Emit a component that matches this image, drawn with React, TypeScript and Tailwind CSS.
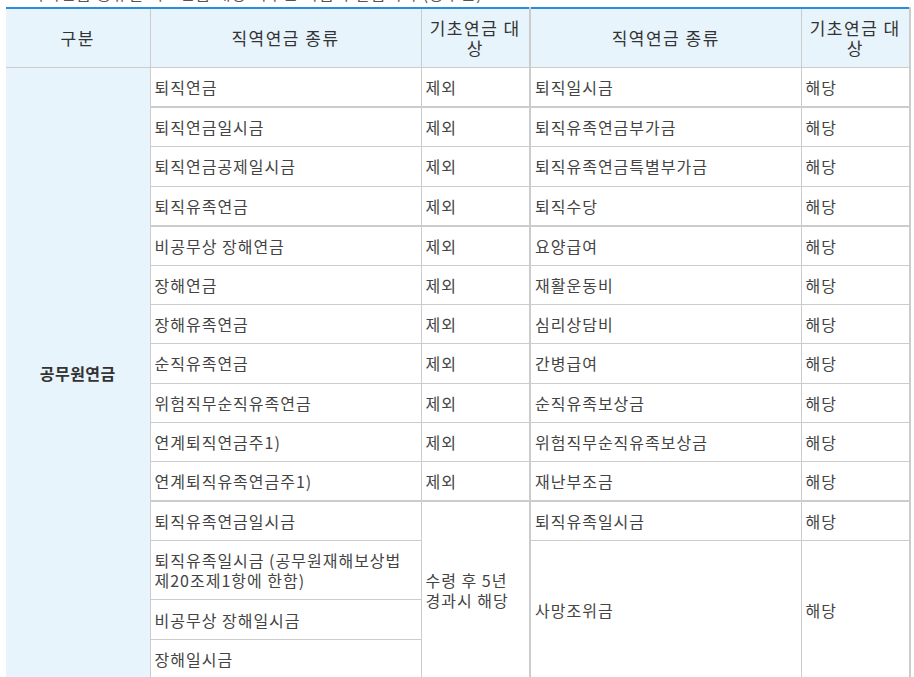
import React from "react";

const FONT = "font-['Noto_Sans_CJK_KR','Noto_Sans',sans-serif]";

const rows: [string, string, string, string][] = [
  ["퇴직연금", "제외", "퇴직일시금", "해당"],
  ["퇴직연금일시금", "제외", "퇴직유족연금부가금", "해당"],
  ["퇴직연금공제일시금", "제외", "퇴직유족연금특별부가금", "해당"],
  ["퇴직유족연금", "제외", "퇴직수당", "해당"],
  ["비공무상 장해연금", "제외", "요양급여", "해당"],
  ["장해연금", "제외", "재활운동비", "해당"],
  ["장해유족연금", "제외", "심리상담비", "해당"],
  ["순직유족연금", "제외", "간병급여", "해당"],
  ["위험직무순직유족연금", "제외", "순직유족보상금", "해당"],
  ["연계퇴직연금주1)", "제외", "위험직무순직유족보상금", "해당"],
  ["연계퇴직유족연금주1)", "제외", "재난부조금", "해당"],
];

const thickRows = new Set([0, 3, 10]);

const td = "border border-[#cccccc] px-[4px] py-[9.1px] text-[16px] leading-[20px] tracking-[1px] break-keep text-[#444444] align-middle text-left font-normal";
const th = "border border-[#cccccc] border-t-2 border-t-[#2a8ddb] bg-[#e8f4fb] px-[4px] py-[9px] text-[17px] leading-[20px] tracking-[1.5px] text-[#333333] font-normal text-center align-middle";

export default function App() {
  return (
    <div className={`bg-white w-[914px] h-[677px] overflow-hidden ${FONT}`}>
      <div className="h-[7px] overflow-hidden pl-[16px]">
        <p className="mt-[-16px] text-[16px] leading-[18px] tracking-[1px] text-[#555555] whitespace-nowrap">
          * 직역연금 종류별 기초연금 대상 여부는 다음과 같습니다 (공무원)
        </p>
      </div>
      <table className="ml-[6px] w-[904px] table-fixed border-collapse">
        <colgroup>
          <col className="w-[144px]" />
          <col className="w-[271px]" />
          <col className="w-[109px]" />
          <col className="w-[271px]" />
          <col className="w-[109px]" />
        </colgroup>
        <thead>
          <tr>
            <th className={`${th} border-l-0`}>구분</th>
            <th className={th}>직역연금 종류</th>
            <th className={`${th} border-r-2`}>기초연금 대상</th>
            <th className={th}>직역연금 종류</th>
            <th className={`${th} border-r-2`}>기초연금 대상</th>
          </tr>
        </thead>
        <tbody>
          {rows.map((r, i) => {
            const b = thickRows.has(i) ? " border-b-2" : "";
            return (
              <tr key={i}>
                {i === 0 && (
                  <td
                    rowSpan={15}
                    className="border border-[#cccccc] border-l-0 bg-[#e8f4fb] text-center align-middle text-[16px] tracking-[0.5px] font-bold text-[#333333]"
                  >
                    공무원연금
                  </td>
                )}
                <td className={td + b}>{r[0]}</td>
                <td className={td + b + " border-r-2"}>{r[1]}</td>
                <td className={td + b}>{r[2]}</td>
                <td className={td + b + " border-r-2"}>{r[3]}</td>
              </tr>
            );
          })}
          <tr>
            <td className={td}>퇴직유족연금일시금</td>
            <td rowSpan={4} className={td + " border-r-2"}>
              수령 후 5년 경과시 해당
            </td>
            <td className={td}>퇴직유족일시금</td>
            <td className={td + " border-r-2"}>해당</td>
          </tr>
          <tr>
            <td className={td}>퇴직유족일시금 (공무원재해보상법 제20조제1항에 한함)</td>
            <td rowSpan={3} className={td}>
              사망조위금
            </td>
            <td rowSpan={3} className={td + " border-r-2"}>
              해당
            </td>
          </tr>
          <tr>
            <td className={td}>비공무상 장해일시금</td>
          </tr>
          <tr>
            <td className={td}>장해일시금</td>
          </tr>
        </tbody>
      </table>
    </div>
  );
}
